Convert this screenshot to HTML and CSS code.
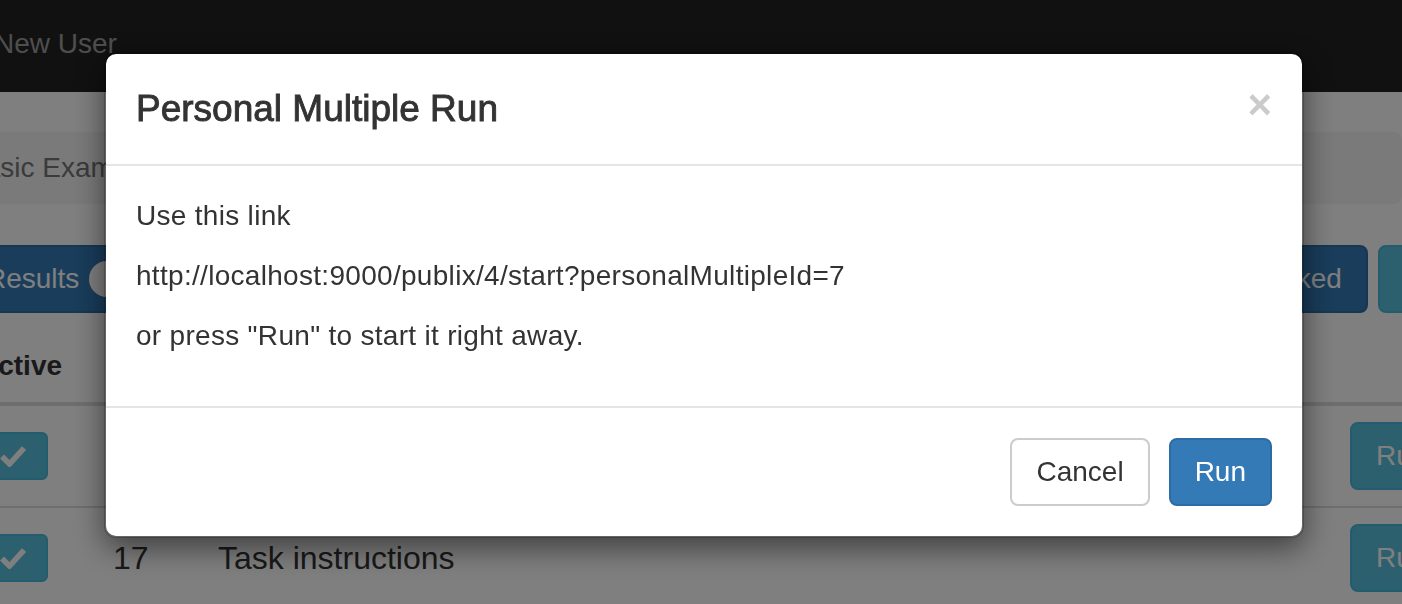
FILE: index.html
```html
<!DOCTYPE html>
<html lang="en">
<head>
<meta charset="utf-8">
<title>Personal Multiple Run</title>
<link rel="stylesheet" href="styles.css">
</head>
<body>
<div class="page">
  <nav class="navbar">
    <a class="nav-link">New User</a>
  </nav>

  <ol class="breadcrumb">
    <li class="crumb-active">Basic Example Study</li>
  </ol>

  <div class="btn-row">
    <button class="btn btn-primary">Results <span class="badge">5</span></button>
    <div class="btn-group-right">
      <button class="btn btn-primary">Worked</button>
      <button class="btn btn-info">Clone</button>
    </div>
  </div>

  <table class="table">
    <colgroup>
      <col class="c1"><col class="c2"><col class="c3"><col class="c4">
    </colgroup>
    <thead>
      <tr><th>Active</th><th>ID</th><th>Title</th><th></th></tr>
    </thead>
    <tbody>
      <tr>
        <td><button class="btn btn-info btn-xs"><svg class="check" viewBox="0 0 26 22" width="26" height="22"><path d="M2 11.5 L9.5 19 L24 3" fill="none" stroke="#fff" stroke-width="5.5"/></svg></button></td>
        <td>16</td>
        <td>Introduction</td>
        <td><button class="btn btn-info">Run</button></td>
      </tr>
      <tr>
        <td><button class="btn btn-info btn-xs"><svg class="check" viewBox="0 0 26 22" width="26" height="22"><path d="M2 11.5 L9.5 19 L24 3" fill="none" stroke="#fff" stroke-width="5.5"/></svg></button></td>
        <td>17</td>
        <td>Task instructions</td>
        <td><button class="btn btn-info">Run</button></td>
      </tr>
    </tbody>
  </table>
</div>

<div class="backdrop"></div>

<div class="modal">
  <div class="modal-header">
    <button class="close" type="button">&times;</button>
    <h4 class="modal-title">Personal Multiple Run</h4>
  </div>
  <div class="modal-body">
    <p>Use this link</p>
    <p>http://localhost:9000/publix/4/start?personalMultipleId=7</p>
    <p>or press "Run" to start it right away.</p>
  </div>
  <div class="modal-footer">
    <button class="btn btn-default">Cancel</button>
    <button class="btn btn-primary">Run</button>
  </div>
</div>
</body>
</html>
```

FILE: styles.css
```css
html, body {
  margin: 0;
  padding: 0;
  overflow: hidden;
  width: 1402px;
  height: 604px;
}
body {
  font-family: "Liberation Sans", Arial, Helvetica, sans-serif;
  font-size: 28px;
  line-height: 40px;
  color: #333;
  background: #fff;
}

.navbar {
  height: 92px;
  background: #222;
  box-sizing: border-box;
  padding-top: 24px;
  margin-bottom: 40px;
}
.nav-link {
  display: block;
  margin-left: -6px;
  color: #9d9d9d;
  line-height: 40px;
}

.breadcrumb {
  list-style: none;
  margin: 0 0 41px 0;
  padding: 16px 30px;
  margin-left: -64px;
  background: #f5f5f5;
  border-radius: 8px;
  height: 40px;
}
.crumb-active { color: #777; }

.btn {
  display: inline-block;
  box-sizing: border-box;
  font-family: inherit;
  font-size: 28px;
  line-height: 40px;
  padding: 12px 24px;
  border: 2px solid transparent;
  border-radius: 8px;
  white-space: nowrap;
  margin: 0;
  cursor: pointer;
}
.btn-primary { background: #337ab7; border-color: #2e6da4; color: #fff; }
.btn-info { background: #5bc0de; border-color: #46b8da; color: #fff; }
.btn-default { background: #fff; border-color: #ccc; color: #333; }

.btn-xs {
  padding: 4px 20px;
  font-size: 24px;
  line-height: 36px;
  border-radius: 6px;
  display: inline-flex;
  align-items: center;
  height: 48px;
}
.check { display: block; }

.badge {
  display: inline-block;
  position: relative;
  top: -2px;
  min-width: 20px;
  padding: 6px 14px;
  font-size: 24px;
  font-weight: bold;
  line-height: 24px;
  color: #337ab7;
  background: #fff;
  border-radius: 20px;
  vertical-align: middle;
  margin-left: 2px;
}

.btn-row {
  display: flex;
  align-items: center;
  margin-left: -40px;
  margin-right: -101px;
}
.btn-group-right {
  margin-left: auto;
  display: flex;
  gap: 10px;
}

.table {
  margin-top: 17px;
  margin-left: -38px;
  width: 1507px;
  border-collapse: collapse;
  table-layout: fixed;
}
.c1 { width: 135px; }
.c2 { width: 105px; }
.c3 { width: 1132px; }
.c4 { width: 135px; }
.table th {
  text-align: left;
  font-weight: bold;
  padding: 16px;
  line-height: 40px;
  border-bottom: 4px solid #ddd;
}
.table td {
  padding: 16px;
  font-size: 32px;
  line-height: 40px;
  border-top: 2px solid #ddd;
  vertical-align: middle;
}
.table td .btn { font-size: 28px; }
.table td .btn-xs { font-size: 24px; }

.backdrop {
  position: fixed;
  inset: 0;
  background: rgba(0, 0, 0, 0.5);
}

.modal {
  position: fixed;
  left: 104px;
  top: 52px;
  width: 1200px;
  box-sizing: border-box;
  background: #fff;
  border: 2px solid rgba(0, 0, 0, 0.2);
  border-radius: 12px;
  box-shadow: 0 10px 30px rgba(0, 0, 0, 0.5);
  background-clip: padding-box;
}
.modal-header {
  padding: 30px;
  border-bottom: 2px solid #e5e5e5;
}
.modal-title {
  margin: 0;
  font-size: 37px;
  line-height: 50px;
  font-weight: 500;
  color: #333;
  -webkit-text-stroke: 0.9px #333;
}
.close {
  float: right;
  margin-top: -4px;
  padding: 0;
  border: 0;
  background: transparent;
  font-family: inherit;
  font-size: 42px;
  font-weight: bold;
  line-height: 50px;
  color: #000;
  opacity: 0.2;
}
.modal-body {
  padding: 30px;
  letter-spacing: 0.3px;
}
.modal-body p {
  margin: 0 0 20px;
}
.modal-footer {
  padding: 30px;
  border-top: 2px solid #e5e5e5;
  display: flex;
  justify-content: flex-end;
  gap: 19px;
}
```
